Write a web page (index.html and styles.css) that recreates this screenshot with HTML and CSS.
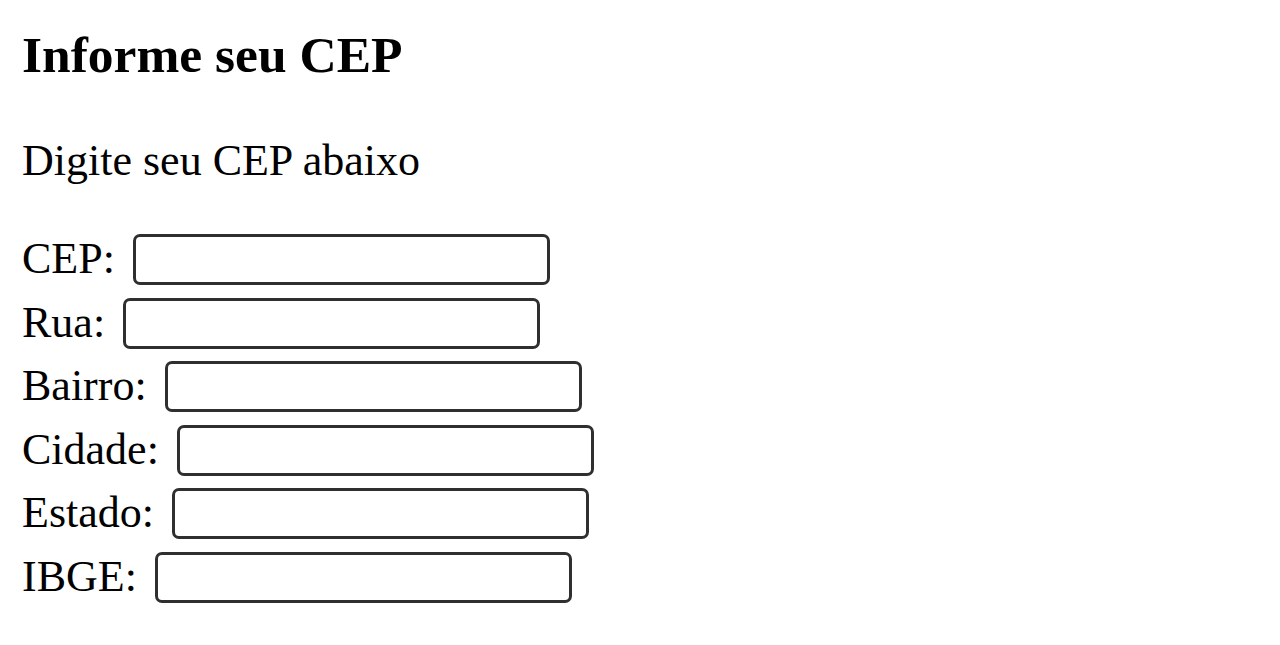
FILE: index.html
```html
<!DOCTYPE html>
<html lang="pt-BR">
<head>
<meta charset="utf-8">
<title>Informe seu CEP</title>
<link rel="stylesheet" href="styles.css">
</head>
<body>
<h3 class="title">Informe seu CEP</h3>
<p class="intro">Digite seu CEP abaixo</p>
<form class="cep-form">
  <label class="row"><span class="label-text">CEP:</span><input class="field" type="text" name="cep"></label>
  <label class="row"><span class="label-text">Rua:</span><input class="field" type="text" name="rua"></label>
  <label class="row"><span class="label-text">Bairro:</span><input class="field" type="text" name="bairro"></label>
  <label class="row"><span class="label-text">Cidade:</span><input class="field" type="text" name="cidade"></label>
  <label class="row"><span class="label-text">Estado:</span><input class="field" type="text" name="estado"></label>
  <label class="row"><span class="label-text">IBGE:</span><input class="field" type="text" name="ibge"></label>
</form>
</body>
</html>
```
FILE: styles.css
```css
html, body {
  background: #fff;
}
body {
  margin: 0;
  padding: 0 22px;
  font-family: "Liberation Serif", "Times New Roman", serif;
  color: #000;
}
.title {
  margin: 25px 0 0;
  font-size: 51.5px;
  font-weight: bold;
  line-height: normal;
}
.intro {
  margin: 51px 0 0;
  font-size: 44px;
  line-height: normal;
}
.cep-form {
  margin-top: 48px;
  display: flex;
  flex-direction: column;
  gap: 12.5px;
}
.row {
  display: flex;
  align-items: center;
  gap: 18px;
  font-size: 44px;
  line-height: normal;
  height: 51px;
}
.label-text {
  position: relative;
  top: -1px;
}
.field {
  box-sizing: border-box;
  width: 417px;
  height: 51px;
  margin: 0;
  border: 3px solid #2f2f2f;
  border-radius: 7px;
  background: #fff;
  padding: 0 6px;
  font-size: 36px;
  font-family: inherit;
}
```
